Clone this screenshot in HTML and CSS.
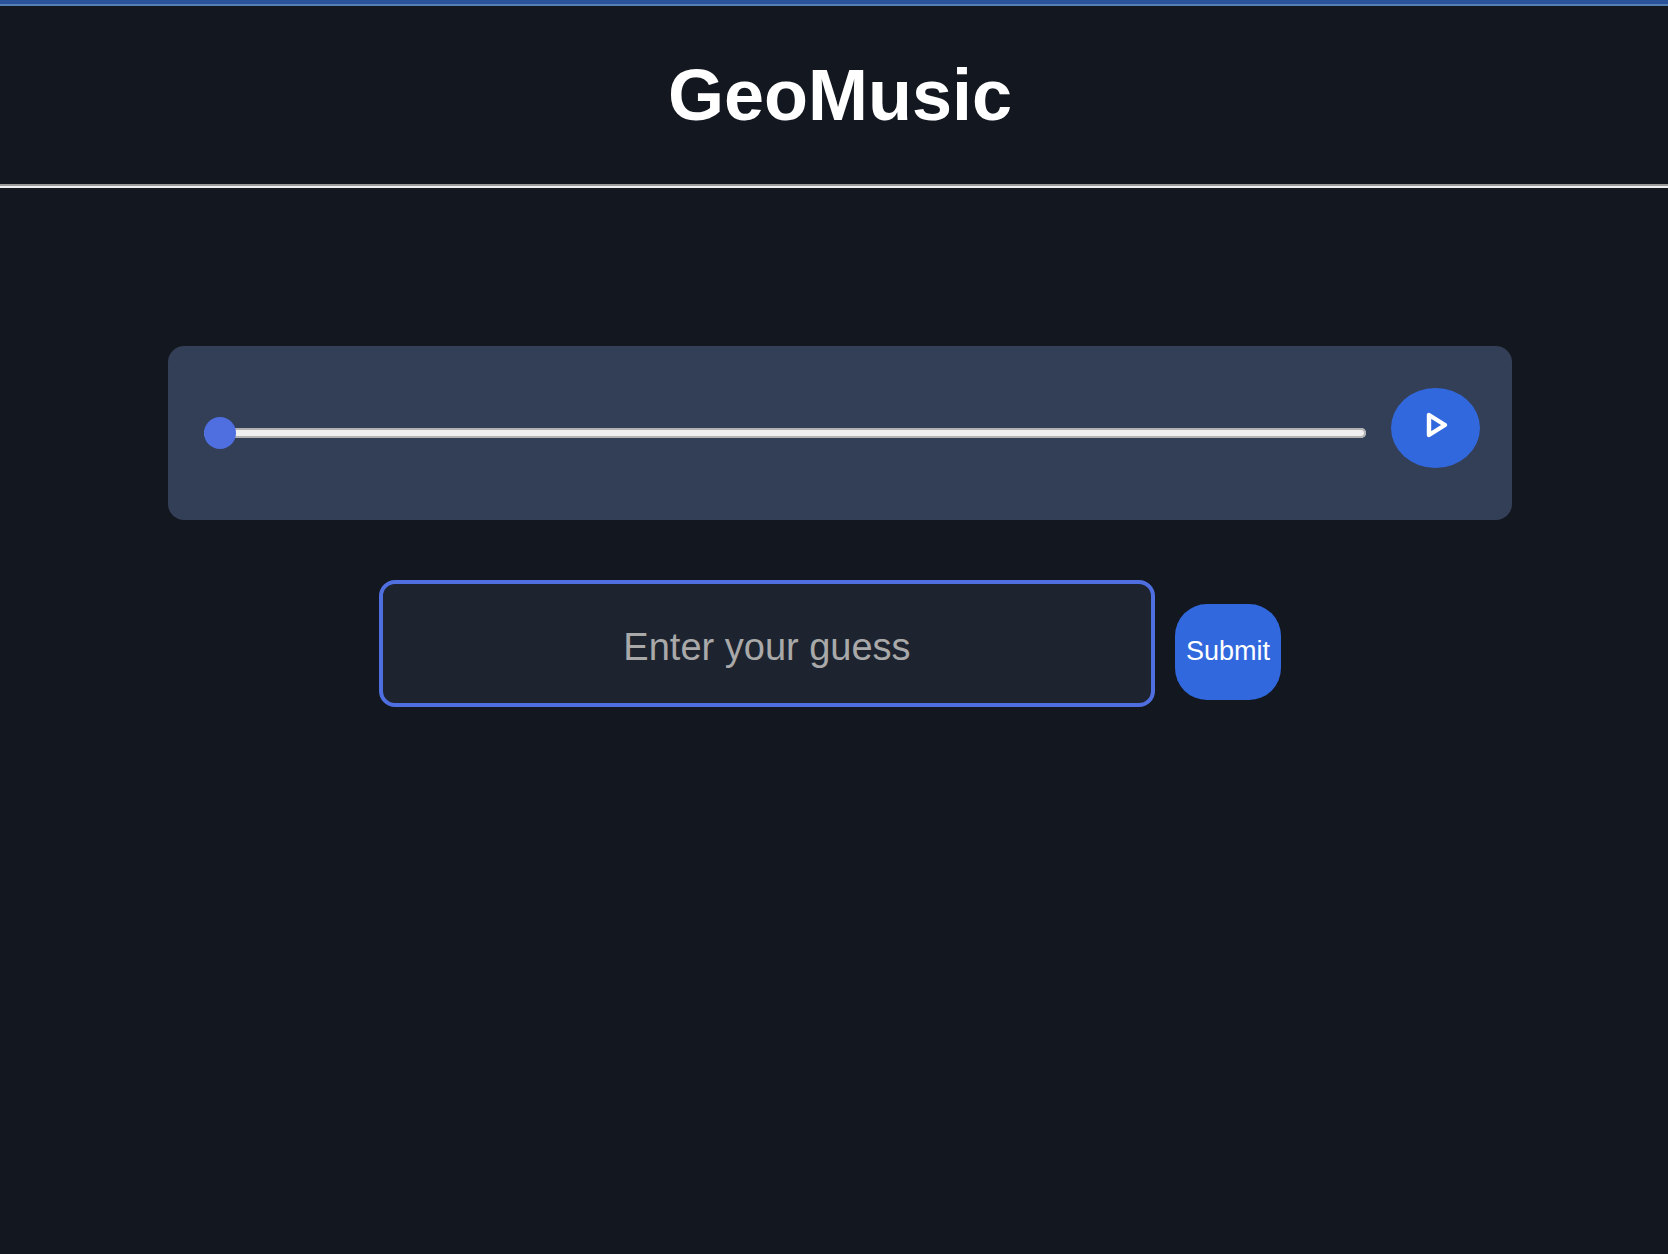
FILE: index.html
```html
<!DOCTYPE html>
<html lang="en">
<head>
  <meta charset="utf-8">
  <meta name="viewport" content="width=device-width, initial-scale=1">
  <title>GeoMusic</title>
  <link rel="stylesheet" href="styles.css">
</head>
<body>
  <header class="header">
    <h1 class="title">GeoMusic</h1>
  </header>
  <main class="main">
    <section class="player">
      <input class="seek" type="range" min="0" max="100" value="0" aria-label="Playback position">
      <button class="play" type="button" aria-label="Play">
        <svg class="play-icon" viewBox="0 0 24 28" aria-hidden="true">
          <path d="M4 4v20l16-10z" fill="none" stroke="currentColor" stroke-width="4.4" stroke-linejoin="round"/>
        </svg>
      </button>
    </section>
    <form class="guess">
      <input class="guess-input" type="text" placeholder="Enter your guess" aria-label="Enter your guess">
      <button class="submit" type="button">Submit</button>
    </form>
  </main>
</body>
</html>
```
FILE: styles.css
```css
* {
  box-sizing: border-box;
}

body {
  margin: 0;
  min-height: 100vh;
  background: #13171f;
  color: #fff;
  font-family: "Liberation Sans", Arial, sans-serif;
}

.header {
  padding: 48px 0 48px 12px;
  border-top: 4px solid #2a5298;
  border-bottom: 2px solid #eee;
  box-shadow: inset 0 2px #5580b5, inset 0 -2px #9a9a9a;
  text-align: center;
}

.title {
  margin: 0;
  font-size: 72px;
  line-height: 86px;
}

.main {
  padding: 158px 156px 0 168px;
}

.player {
  display: flex;
  gap: 25px;
  padding: 42px 32px 52px 36px;
  border-radius: 16px;
  background: #333f56;
}

.seek {
  flex: 1;
  min-width: 0;
  height: 32px;
  margin: 29px 0 0;
  background: transparent;
  appearance: none;
}

.seek::-webkit-slider-runnable-track {
  height: 10px;
  border-radius: 5px;
  background: #efefef;
  box-shadow: inset 0 0 0 2px #b2b2b2;
}

.seek::-webkit-slider-thumb {
  width: 32px;
  height: 32px;
  margin-top: -11px;
  border-radius: 50%;
  background: #4f6fe0;
  appearance: none;
}

.play {
  display: flex;
  align-items: center;
  justify-content: center;
  width: 89px;
  height: 80px;
  padding: 0 0 6px 2px;
  border: 0;
  border-radius: 50%;
  background: #3268dd;
  color: #fff;
}

.play-icon {
  width: 24px;
  height: 28px;
}

.guess {
  display: flex;
  align-items: baseline;
  justify-content: center;
  gap: 20px;
  margin-top: 60px;
  padding-right: 20px;
}

.guess-input {
  flex: 0 1 776px;
  min-width: 0;
  height: 127px;
  padding: 8px 16px 0;
  border: 4px solid #4f6fe0;
  border-radius: 16px;
  background: #1d2430;
  color: #fff;
  font: 38px "Liberation Sans", Arial, sans-serif;
  text-align: center;
}

.guess-input::placeholder {
  color: #a9a9a9;
  opacity: 1;
}

.submit {
  width: 106px;
  height: 96px;
  padding: 0;
  border: 0;
  border-radius: 32px;
  background: #3268dd;
  color: #fff;
  font: 27px "Liberation Sans", Arial, sans-serif;
}
```
